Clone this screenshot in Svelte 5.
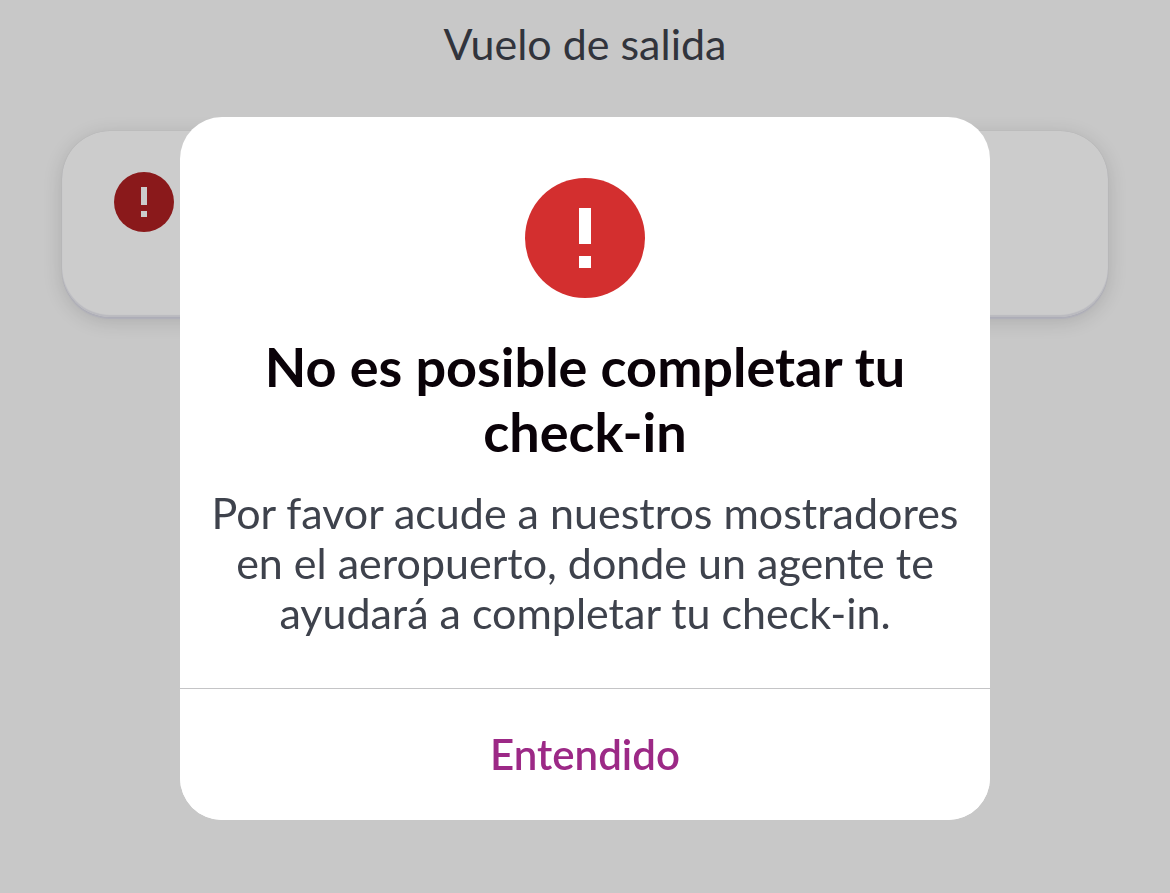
<script>
  let open = $state(true);
</script>

<svelte:head><title>Check-in</title></svelte:head>

{#snippet alertIcon()}
  <svg class="alert" viewBox="0 0 120 120" aria-hidden="true">
    <circle cx="60" cy="60" r="60" />
    <path d="M54 30h12v36H54zM54 78h12v12H54z" fill="#fff" />
  </svg>
{/snippet}

<main class="page">
  <h1>Vuelo de salida</h1>
  <section class="card">{@render alertIcon()}</section>
</main>

{#if open}
  <div class="overlay">
    <div class="dialog" role="alertdialog" aria-modal="true" aria-labelledby="title" aria-describedby="message">
      <div class="body">
        {@render alertIcon()}
        <h2 id="title">No es posible completar tu check-in</h2>
        <p id="message">Por favor acude a nuestros mostradores en el aeropuerto, donde un agente te ayudará a completar tu check-in.</p>
      </div>
      <button type="button" onclick={() => (open = false)}>Entendido</button>
    </div>
  </div>
{/if}

<style>
  :global(body) {
    margin: 0;
    background: #fafafa;
    font-family: Lato, "Liberation Sans", sans-serif;
  }
  .page {
    box-sizing: border-box;
    min-height: 100vh;
    padding: 19px 62px;
  }
  h1 {
    margin: 0 0 62px;
    color: #3e424c;
    font-size: 43px;
    font-weight: 400;
    line-height: 50px;
    text-align: center;
  }
  .card {
    box-sizing: border-box;
    min-height: 186px;
    padding: 41px 52px;
    border-radius: 48px;
    background: #fff;
    box-shadow: inset 0 -2px 1px #e9e9f0, 0 0 1px #00001a20, 0 2px 1px #dcdce8, 0 4px 20px #00000024;
  }
  .alert {
    display: block;
    fill: #d32f2f;
  }
  .card .alert {
    width: 60px;
    fill: #ad2022;
  }
  .overlay {
    position: fixed;
    inset: 0;
    display: grid;
    place-items: center;
    padding: 44px 16px 0;
    background: rgb(0 0 0 / 20%);
  }
  .dialog {
    width: 100%;
    max-width: 810px;
    overflow: hidden;
    border-radius: 42px;
    background: #fff;
    text-align: center;
  }
  .body {
    display: flex;
    flex-direction: column;
    align-items: center;
    padding: 61px 24px 50px;
  }
  .body .alert {
    width: 120px;
  }
  h2 {
    max-width: 700px;
    margin: 36px 0 24px;
    color: #0a0208;
    font-size: 54px;
    font-weight: 700;
    line-height: 65px;
  }
  p {
    margin: 0;
    color: #3e424c;
    font-size: 43px;
    line-height: 50px;
  }
  button {
    width: 100%;
    padding: 40px 24px 41px;
    border: 0;
    border-top: 1px solid #c4c4c6;
    background: #fff;
    color: #9c2986;
    font: 600 42px/50px Lato, "Liberation Sans", sans-serif;
    cursor: pointer;
  }
</style>
